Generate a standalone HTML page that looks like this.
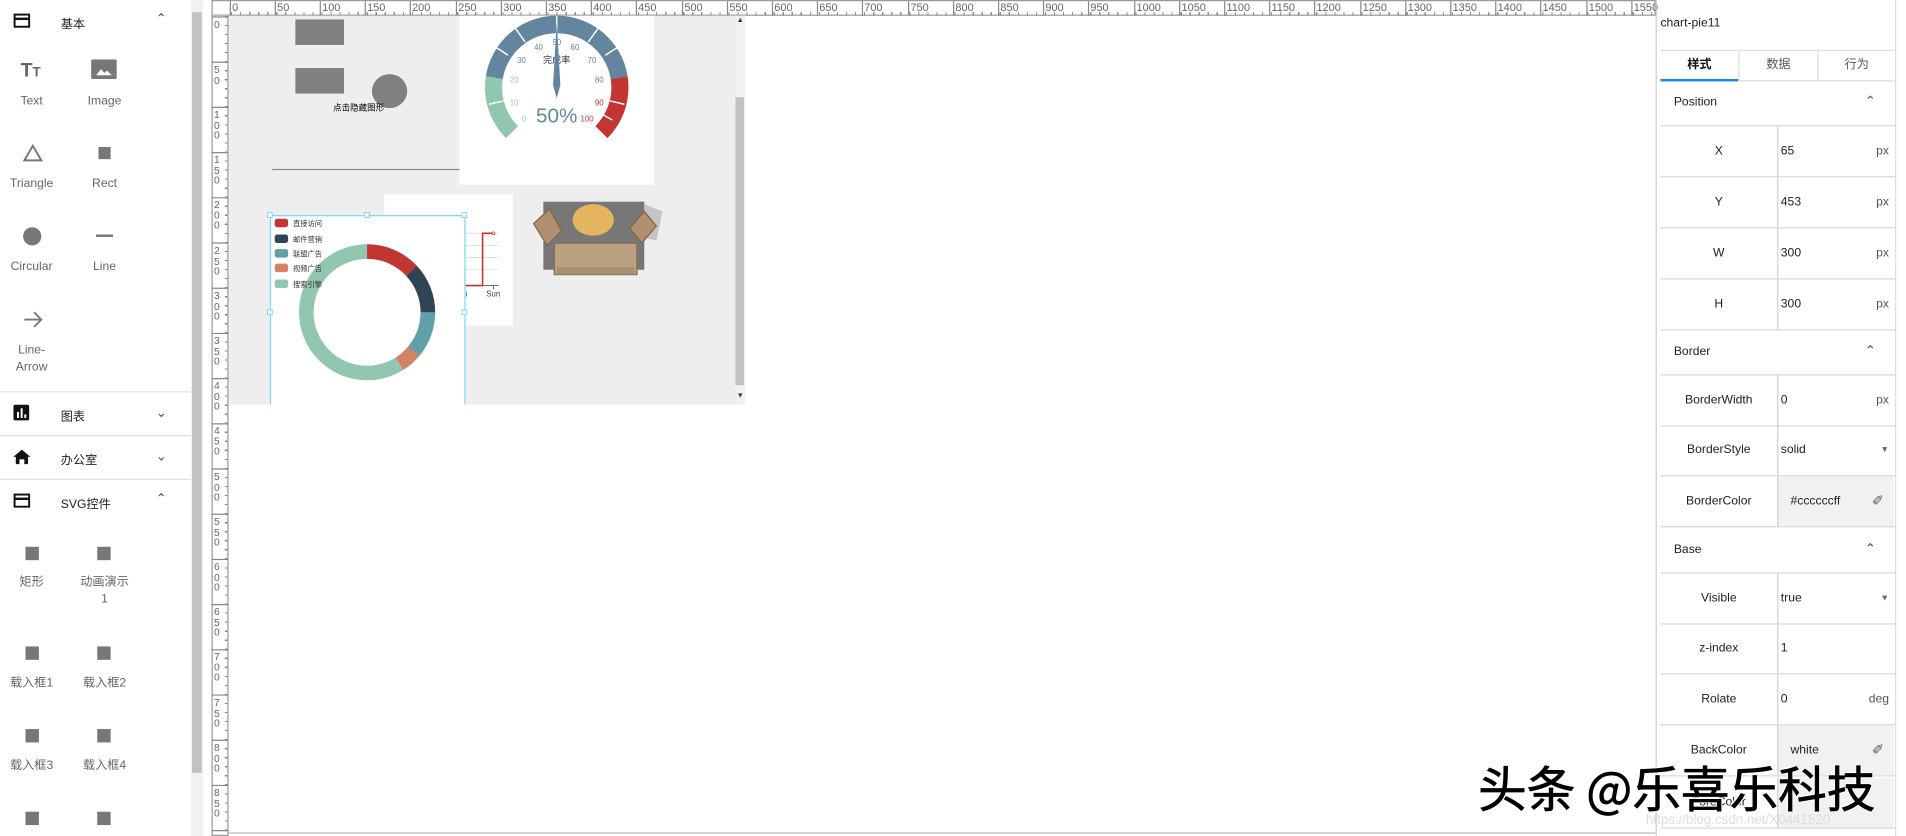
<!DOCTYPE html>
<html><head><meta charset="utf-8"><style>
*{margin:0;padding:0;box-sizing:border-box}
html,body{width:1906px;height:836px;overflow:hidden;background:#fff}
#w{position:absolute;left:0;top:0;width:1568px;height:688px;transform:scale(1.21556,1.21512);transform-origin:0 0;font-family:"Liberation Sans","Noto Sans CJK SC",sans-serif;color:#333}
.a{position:absolute}
.lb{position:absolute;font-size:10px;color:#666;text-align:center;width:60px;line-height:14px}
.hd{position:absolute;left:0;width:157px;height:36px;font-size:10px;color:#222}
.hd .t{position:absolute;left:50px;top:11px}
.hd .c{position:absolute;left:128px;top:9px;font-size:11px;color:#555}
.sep{position:absolute;left:0;width:157px;height:1px;background:#e2e2e2}
.hr{position:absolute;top:1px;font-size:9px;color:#666;line-height:10px;border-left:1px solid #888;padding-left:1px;height:12px}
.vr{position:absolute;left:176px;font-size:8.5px;color:#666;line-height:8.5px;width:8px}
.row{position:absolute;left:1366px;width:193px;height:42px;border-bottom:1px solid #d8d8d8}
.row .k{position:absolute;left:0;top:0;width:96px;height:41px;line-height:41px;text-align:center;font-size:10px;color:#222}
.row .v{position:absolute;left:96px;top:0;width:96px;height:41px;border-left:1px solid #d0d0d0;line-height:41px;font-size:10px;color:#222;padding-left:2px}
.row .u{position:absolute;right:4px;top:0;color:#555}
.sec{position:absolute;left:1366px;width:193px;font-size:10px;color:#222}
.sec .t{position:absolute;left:11px}
.sec .c{position:absolute;left:168px;font-size:11px;color:#555}
.gr{background:#f1f1f1}
</style></head><body><div id="w">

<!-- sidebar -->
<div class="a" style="left:0;top:0;width:157px;height:688px;background:#fff"></div>
<div class="hd" style="top:0"><svg class="a" style="left:11px;top:11px" width="14" height="12"><rect x="1" y="1" width="12" height="10" fill="none" stroke="#111" stroke-width="1.6"/><rect x="1" y="3.5" width="12" height="2" fill="#111"/></svg><span class="t">基本</span><span class="c">&#x2303;</span></div>
<div class="a" style="left:17px;top:50px;font-size:16px;font-weight:bold;color:#666">T<span style="font-size:11px">T</span></div>
<div class="a" style="left:75px;top:49px;width:21px;height:16px;background:#777;border-radius:1px"></div>
<svg class="a" style="left:79px;top:56px" width="14" height="6"><path d="M0 6 L4 1 L7 4 L9 2 L13 6Z" fill="#fff"/></svg>
<div class="lb" style="left:-4px;top:77px">Text</div>
<div class="lb" style="left:56px;top:77px">Image</div>
<svg class="a" style="left:18px;top:118px" width="18" height="16"><path d="M9 2 L16 14 L2 14Z" fill="none" stroke="#777" stroke-width="1.6"/></svg>
<div class="a" style="left:81px;top:121px;width:10px;height:10px;background:#777"></div>
<div class="lb" style="left:-4px;top:145px">Triangle</div>
<div class="lb" style="left:56px;top:145px">Rect</div>
<div class="a" style="left:19px;top:187px;width:15px;height:15px;border-radius:50%;background:#777"></div>
<div class="a" style="left:79px;top:193px;width:14px;height:2px;background:#777"></div>
<div class="lb" style="left:-4px;top:213px">Circular</div>
<div class="lb" style="left:56px;top:213px">Line</div>
<svg class="a" style="left:18px;top:255px" width="18" height="16"><path d="M2 8 H16 M10 2 L16 8 L10 14" fill="none" stroke="#777" stroke-width="1.5"/></svg>
<div class="lb" style="left:-4px;top:282px">Line-<br>Arrow</div>
<div class="sep" style="top:322px"></div>
<div class="hd" style="top:323px"><svg class="a" style="left:11px;top:10px" width="14" height="14"><rect x="0" y="0" width="13" height="13" rx="1.5" fill="#111"/><rect x="3" y="6" width="1.6" height="5" fill="#fff"/><rect x="6" y="3" width="1.6" height="8" fill="#fff"/><rect x="9" y="8" width="1.6" height="3" fill="#fff"/></svg><span class="t">图表</span><span class="c" style="top:10px">&#x2304;</span></div>
<div class="sep" style="top:358px"></div>
<div class="hd" style="top:359px"><svg class="a" style="left:10px;top:10px" width="16" height="14"><path d="M8 1 L15 7 H13 V13 H10 V9 H6 V13 H3 V7 H1Z" fill="#111"/></svg><span class="t">办公室</span><span class="c" style="top:10px">&#x2304;</span></div>
<div class="sep" style="top:394px"></div>
<div class="hd" style="top:395px"><svg class="a" style="left:11px;top:11px" width="14" height="12"><rect x="1" y="1" width="12" height="10" fill="none" stroke="#111" stroke-width="1.6"/><rect x="1" y="3.5" width="12" height="2" fill="#111"/></svg><span class="t">SVG控件</span><span class="c">&#x2303;</span></div>
<div class="a" style="left:21px;top:450px;width:11px;height:11px;background:#777"></div>
<div class="a" style="left:80px;top:450px;width:11px;height:11px;background:#777"></div>
<div class="lb" style="left:-4px;top:473px">矩形</div>
<div class="lb" style="left:56px;top:473px">动画演示<br>1</div>
<div class="a" style="left:21px;top:532px;width:11px;height:11px;background:#777"></div>
<div class="a" style="left:80px;top:532px;width:11px;height:11px;background:#777"></div>
<div class="lb" style="left:-4px;top:556px">载入框1</div>
<div class="lb" style="left:56px;top:556px">载入框2</div>
<div class="a" style="left:21px;top:600px;width:11px;height:11px;background:#777"></div>
<div class="a" style="left:80px;top:600px;width:11px;height:11px;background:#777"></div>
<div class="lb" style="left:-4px;top:624px">载入框3</div>
<div class="lb" style="left:56px;top:624px">载入框4</div>
<div class="a" style="left:21px;top:668px;width:11px;height:11px;background:#777"></div>
<div class="a" style="left:80px;top:668px;width:11px;height:11px;background:#777"></div>

<!-- sidebar scrollbar -->
<div class="a" style="left:157px;top:0;width:10px;height:688px;background:#f1f1f1"></div>
<div class="a" style="left:158px;top:10px;width:8px;height:626px;background:#c1c1c1"></div>

<!-- rulers -->
<div class="a" style="left:174px;top:0;width:1188px;height:13px;border:1px solid #999;background:#fff;background-image:repeating-linear-gradient(90deg,#888 0 1px,transparent 1px 7.44px);background-size:100% 3px;background-repeat:no-repeat;background-position:15px 9px"></div>
<div class="a" style="left:174px;top:13px;width:14px;height:675px;border:1px solid #999;border-top:none;background:#fff;background-image:repeating-linear-gradient(180deg,#888 0 1px,transparent 1px 7.44px);background-size:3px 100%;background-repeat:no-repeat;background-position:10px 0"></div>
<svg class="a" style="left:0;top:0" width="1362" height="688">
<g stroke="#888" stroke-width="1">
<path d="M174 14H188M174 51.2H188M174 88.4H188M174 125.6H188M174 162.8H188M174 200H188M174 237.2H188M174 274.4H188M174 311.6H188M174 348.8H188M174 386H188M174 423.2H188M174 460.4H188M174 497.6H188M174 534.8H188M174 572H188M174 609.2H188M174 646.4H188M174 683.6H188"/>
</g></svg>
<span class="hr" style="left:189px">0</span><span class="hr" style="left:226px">50</span><span class="hr" style="left:263px">100</span><span class="hr" style="left:300px">150</span><span class="hr" style="left:337px">200</span><span class="hr" style="left:375px">250</span><span class="hr" style="left:412px">300</span><span class="hr" style="left:449px">350</span><span class="hr" style="left:486px">400</span><span class="hr" style="left:523px">450</span><span class="hr" style="left:561px">500</span><span class="hr" style="left:598px">550</span><span class="hr" style="left:635px">600</span><span class="hr" style="left:672px">650</span><span class="hr" style="left:709px">700</span><span class="hr" style="left:747px">750</span><span class="hr" style="left:784px">800</span><span class="hr" style="left:821px">850</span><span class="hr" style="left:858px">900</span><span class="hr" style="left:895px">950</span><span class="hr" style="left:933px">1000</span><span class="hr" style="left:970px">1050</span><span class="hr" style="left:1007px">1100</span><span class="hr" style="left:1044px">1150</span><span class="hr" style="left:1081px">1200</span><span class="hr" style="left:1119px">1250</span><span class="hr" style="left:1156px">1300</span><span class="hr" style="left:1193px">1350</span><span class="hr" style="left:1230px">1400</span><span class="hr" style="left:1267px">1450</span><span class="hr" style="left:1305px">1500</span><span class="hr" style="left:1342px">1550</span>
<span class="vr" style="top:16px">0</span>
<span class="vr" style="top:53px">5<br>0</span>
<span class="vr" style="top:90px">1<br>0<br>0</span>
<span class="vr" style="top:127px">1<br>5<br>0</span>
<span class="vr" style="top:164px">2<br>0<br>0</span>
<span class="vr" style="top:202px">2<br>5<br>0</span>
<span class="vr" style="top:239px">3<br>0<br>0</span>
<span class="vr" style="top:276px">3<br>5<br>0</span>
<span class="vr" style="top:313px">4<br>0<br>0</span>
<span class="vr" style="top:350px">4<br>5<br>0</span>
<span class="vr" style="top:388px">5<br>0<br>0</span>
<span class="vr" style="top:425px">5<br>5<br>0</span>
<span class="vr" style="top:462px">6<br>0<br>0</span>
<span class="vr" style="top:499px">6<br>5<br>0</span>
<span class="vr" style="top:536px">7<br>0<br>0</span>
<span class="vr" style="top:574px">7<br>5<br>0</span>
<span class="vr" style="top:611px">8<br>0<br>0</span>
<span class="vr" style="top:648px">8<br>5<br>0</span>
<div class="a" style="left:188px;top:685px;width:1174px;height:1px;background:#bbb"></div>

<!-- canvas -->
<div class="a" style="left:188px;top:13px;width:425px;height:320px;background:#eeeeee"></div>
<div class="a" style="left:604px;top:13px;width:9px;height:320px;background:#f1f1f1"></div>
<div class="a" style="left:605px;top:80px;width:7px;height:237px;background:#c1c1c1"></div>
<div class="a" style="left:606px;top:14px;font-size:6px;color:#333">▲</div>
<div class="a" style="left:606px;top:323px;font-size:6px;color:#333">▼</div>

<div class="a" style="left:243px;top:16px;width:40px;height:21px;background:#808080"></div>
<div class="a" style="left:243px;top:56px;width:40px;height:21px;background:#808080"></div>
<div class="a" style="left:306px;top:61px;width:29px;height:28px;border-radius:50%;background:#808080"></div>
<div class="a" style="left:274px;top:84px;font-size:7px;color:#000">点击隐藏图形</div>
<div class="a" style="left:224px;top:139px;width:155px;height:1px;background:#888"></div>

<!-- gauge -->
<div class="a" style="left:378px;top:13px;width:160px;height:139px;background:#fff"></div>
<svg class="a" style="left:0;top:0" width="600" height="340">
<path d="M416.3,113.7 A59,59 0 0 1 399.7,62.8 L413.6,65 A45,45 0 0 0 426.2,103.8 Z" fill="#91c7ae"/>
<path d="M399.7,62.8 A59,59 0 0 1 516.3,62.8 L502.4,65 A45,45 0 0 0 413.6,65 Z" fill="#63869e"/>
<path d="M516.3,62.8 A59,59 0 0 1 499.7,113.7 L489.8,103.8 A45,45 0 0 0 502.4,65 Z" fill="#c23531"/>
<g stroke="#fff" stroke-width="1.2">
<path d="M402.4,85.8 L414.1,83.1 M405.5,37.3 L418,45.5 M423.3,22.4 L432,34.5 M458,13 L458,28 M492.7,22.4 L484,34.5 M510.5,37.3 L498,45.5 M513.6,85.8 L501.9,83.1 M503.7,98.8 L493.6,93"/>
</g>
<g font-size="6.5" fill="#63869e" text-anchor="middle" font-family="Liberation Sans">
<text x="431" y="100" fill="#91c7ae">0</text><text x="423" y="87" fill="#91c7ae">10</text><text x="423" y="68" fill="#91c7ae">20</text><text x="429" y="52">30</text><text x="443" y="41">40</text><text x="458" y="37">50</text><text x="473" y="41">60</text><text x="487" y="52">70</text><text x="493" y="68">80</text><text x="493" y="87" fill="#c23531">90</text><text x="483" y="100" fill="#c23531">100</text>
</g>
<text x="458" y="52" font-size="7.5" text-anchor="middle" fill="#333" font-family="Liberation Sans,Noto Sans CJK SC">完成率</text>
<path d="M458,18 L455,70 L458,81 L461,70 Z" fill="#63869e"/>
<text x="458" y="101" font-size="17" text-anchor="middle" fill="#63869e" font-family="Liberation Sans">50%</text>

<!-- line chart -->
<rect x="316" y="160" width="106" height="108" fill="#fff"/>
<g stroke="#ddd" stroke-width="0.7"><path d="M382 192H410M382 202H410M382 212H410M382 222H410"/></g>
<path d="M382 235 H410 M406 235 V238" stroke="#555" stroke-width="0.7"/>
<path d="M382 235 H397 V192 H406" stroke="#c23531" stroke-width="1.3" fill="none"/>
<circle cx="406" cy="192" r="1.2" fill="#fff" stroke="#c23531" stroke-width="0.6"/>
<text x="400" y="244" font-size="6.5" fill="#444" font-family="Liberation Sans">Sun</text>
<text x="383" y="244" font-size="6.5" fill="#444" font-family="Liberation Sans">i</text>

<!-- sofa -->
<rect x="447" y="166" width="83" height="56" fill="#777"/>
<path d="M530 168 L545 174 L540 198 L530 196Z" fill="#aaa" opacity="0.6"/>
<ellipse cx="488" cy="181" rx="17" ry="13" fill="#e4b45e"/>
<path d="M439 184 L452 172 L462 190 L450 202Z" fill="#b09070" stroke="#7d6449" stroke-width="1"/>
<path d="M518 188 L530 174 L540 186 L528 200Z" fill="#b09070" stroke="#7d6449" stroke-width="1"/>
<rect x="456" y="200" width="68" height="26" fill="#b8a080" stroke="#806850" stroke-width="1"/>
<rect x="458" y="220" width="64" height="6" fill="#a88e70"/>
</svg>

<!-- pie -->
<div class="a" style="left:222px;top:177px;width:161px;height:156px;background:#fff;border:1px solid #7dd8ef;border-bottom:none"></div>
<svg class="a" style="left:0;top:0" width="600" height="340">
<g transform="rotate(-90 302 257)" fill="none" stroke-width="12">
<circle cx="302" cy="257" r="50" stroke="#91c7ae"/>
<circle cx="302" cy="257" r="50" stroke="#d48265" stroke-dasharray="0 113 16 400"/>
<circle cx="302" cy="257" r="50" stroke="#61a0a8" stroke-dasharray="0 78.5 34.5 400"/>
<circle cx="302" cy="257" r="50" stroke="#2f4554" stroke-dasharray="0 41 37.5 400"/>
<circle cx="302" cy="257" r="50" stroke="#c23531" stroke-dasharray="0 0 41 400"/>
</g>
<g font-size="6" fill="#333" font-family="Liberation Sans,Noto Sans CJK SC">
<rect x="226" y="180" width="11" height="7" rx="2" fill="#c23531"/><text x="241" y="186">直接访问</text>
<rect x="226" y="193" width="11" height="7" rx="2" fill="#2f4554"/><text x="241" y="199">邮件营销</text>
<rect x="226" y="205" width="11" height="7" rx="2" fill="#61a0a8"/><text x="241" y="211">联盟广告</text>
<rect x="226" y="217" width="11" height="7" rx="2" fill="#d48265"/><text x="241" y="223">视频广告</text>
<rect x="226" y="230" width="11" height="7" rx="2" fill="#91c7ae"/><text x="241" y="236">搜索引擎</text>
</g>
<g fill="#fff" stroke="#7dd8ef" stroke-width="0.8">
<rect x="220" y="175" width="4" height="4"/><rect x="300" y="175" width="4" height="4"/><rect x="380" y="175" width="4" height="4"/>
<rect x="220" y="255" width="4" height="4"/><rect x="380" y="255" width="4" height="4"/>
</g>
</svg>

<!-- right panel -->
<div class="a" style="left:1362px;top:0;width:1px;height:688px;background:#ccc"></div>
<div class="a" style="left:1559px;top:0;width:1px;height:688px;background:#ddd"></div>
<div class="a" style="left:1366px;top:14px;font-size:10px;color:#222">chart-pie11</div>
<div class="a" style="left:1366px;top:41px;width:193px;height:1px;background:#ddd"></div>
<div class="a" style="left:1366px;top:42px;width:64px;height:25px;text-align:center;line-height:24px;font-size:10px;color:#111;font-weight:bold">样式</div>
<div class="a" style="left:1430px;top:42px;width:1px;height:24px;background:#ddd"></div>
<div class="a" style="left:1431px;top:42px;width:64px;height:25px;text-align:center;line-height:24px;font-size:10px;color:#555">数据</div>
<div class="a" style="left:1495px;top:42px;width:1px;height:24px;background:#ddd"></div>
<div class="a" style="left:1496px;top:42px;width:63px;height:25px;text-align:center;line-height:24px;font-size:10px;color:#555">行为</div>
<div class="a" style="left:1366px;top:66px;width:193px;height:1px;background:#ddd"></div>
<div class="a" style="left:1366px;top:65px;width:64px;height:2px;background:#1e88e5"></div>

<div class="sec" style="top:67px;height:37px;border-bottom:1px solid #d8d8d8"><span class="t" style="top:12px">Position</span><span class="c" style="top:10px">&#x2303;</span></div>
<div class="row" style="top:104px"><div class="k">X</div><div class="v">65<span class="u">px</span></div></div>
<div class="row" style="top:146px"><div class="k">Y</div><div class="v">453<span class="u">px</span></div></div>
<div class="row" style="top:188px"><div class="k">W</div><div class="v">300<span class="u">px</span></div></div>
<div class="row" style="top:230px"><div class="k">H</div><div class="v">300<span class="u">px</span></div></div>
<div class="sec" style="top:272px;height:37px;border-bottom:1px solid #d8d8d8"><span class="t" style="top:12px">Border</span><span class="c" style="top:10px">&#x2303;</span></div>
<div class="row" style="top:309px"><div class="k">BorderWidth</div><div class="v">0<span class="u">px</span></div></div>
<div class="row" style="top:350px"><div class="k">BorderStyle</div><div class="v">solid<span class="u" style="font-size:7px;color:#666">▼</span></div></div>
<div class="row" style="top:392px"><div class="k">BorderColor</div><div class="v gr" style="padding-left:10px">#ccccccff<span class="u" style="right:8px;font-size:12px">&#x2710;</span></div></div>
<div class="sec" style="top:434px;height:38px;border-bottom:1px solid #d8d8d8"><span class="t" style="top:13px">Base</span><span class="c" style="top:11px">&#x2303;</span></div>
<div class="row" style="top:472px"><div class="k">Visible</div><div class="v">true<span class="u" style="font-size:7px;color:#666">▼</span></div></div>
<div class="row" style="top:513px"><div class="k">z-index</div><div class="v">1</div></div>
<div class="row" style="top:555px"><div class="k">Rolate</div><div class="v">0<span class="u">deg</span></div></div>
<div class="row" style="top:597px"><div class="k">BackColor</div><div class="v gr" style="padding-left:10px">white<span class="u" style="right:8px;font-size:12px">&#x2710;</span></div></div>
<div class="row" style="top:640px"><div class="k">ForeColor</div><div class="v gr"></div></div>

<!-- watermark -->
<div class="a" style="left:1216px;top:624px;font-size:40px;line-height:46px;color:#000;font-family:'Noto Sans CJK SC','Liberation Sans',sans-serif;-webkit-text-stroke:0.6px #000;text-shadow:1px 1px 0 #fff,-1px -1px 0 #fff;white-space:nowrap">头条 @乐喜乐科技</div>
<div class="a" style="left:1354px;top:669px;font-size:11px;color:#ddd;white-space:nowrap">https://blog.csdn.net/X0441520</div>
</div></body></html>
